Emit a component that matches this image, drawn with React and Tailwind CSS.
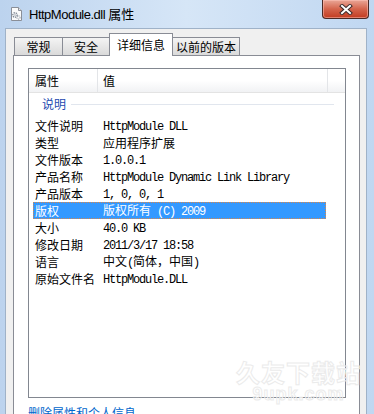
import React from "react";

const rows = [
  ["文件说明", [["m", "HttpModule DLL"]]],
  ["类型", [["c", "应用程序扩展"]]],
  ["文件版本", [["m", "1.0.0.1"]]],
  ["产品名称", [["m", "HttpModule Dynamic Link Library"]]],
  ["产品版本", [["m", "1, 0, 0, 1"]]],
  ["版权", [["c", "版权所有"], ["m", " (C) 2009"]], true],
  ["大小", [["m", "40.0 KB"]]],
  ["修改日期", [["m", "2011/3/17 18:58"]]],
  ["语言", [["c", "中文"], ["m", "("], ["c", "简体，中国"], ["m", ")"]]],
  ["原始文件名", [["m", "HttpModule.DLL"]]],
];

function Value({ parts }) {
  return (
    <span className="whitespace-pre">
      {parts.map(([k, t], i) =>
        k === "m" ? (
          <span key={i} className="font-['Liberation_Mono',monospace] text-[12px] tracking-[-1.2px]">
            {t}
          </span>
        ) : (
          <span key={i} className="font-['Noto_Sans_CJK_SC',sans-serif] text-[12px]">
            {t}
          </span>
        )
      )}
    </span>
  );
}

function DllIcon() {
  return (
    <svg width="13" height="14" viewBox="0 0 13 14">
      <path d="M1.5 0.5 H8.5 L11.5 3.5 V13.5 H1.5 Z" fill="#fbfbfb" stroke="#8a8f98" />
      <path d="M8.5 0.5 V3.5 H11.5" fill="#e6e6e6" stroke="#8a8f98" />
      <circle cx="5" cy="8" r="2.2" fill="none" stroke="#7d8794" strokeWidth="1.4" strokeDasharray="1.2 0.8" />
      <circle cx="5" cy="8" r="0.8" fill="#9aa3ad" />
      <circle cx="8.5" cy="10.5" r="1.6" fill="none" stroke="#a0a8b2" strokeWidth="1.1" strokeDasharray="1 0.7" />
    </svg>
  );
}

export default function App() {
  return (
    <div className="relative w-[374px] h-[414px] overflow-hidden flex flex-col bg-gradient-to-r from-[#bcd3ee] via-[#d6e6f7] to-[#c0d7f1] font-['Noto_Sans_CJK_SC',sans-serif] text-black">
      {/* title bar */}
      <div className="h-[28px] shrink-0 flex items-start">
        <div className="h-[28px] flex items-center pl-[10px] gap-[6px]">
          <DllIcon />
          <span className="text-[13px] leading-none">
            <span className="font-['Liberation_Sans',sans-serif] tracking-[-0.5px] text-[13px]">HttpModule.dll </span>
            <span className="font-['Noto_Sans_CJK_SC',sans-serif]">属性</span>
          </span>
        </div>
        <div className="ml-auto mr-[5px] w-[47px] h-[19px] rounded-b-[4px] border border-t-0 border-[#4a2a26] bg-gradient-to-b from-[#e9a697] via-[#d4644c] to-[#c23a1f] flex items-center justify-center shadow-[inset_0_0_0_1px_rgba(255,200,190,0.5)]">
          <svg width="14" height="11" viewBox="0 0 14 11">
            <path d="M3 2 L11 9 M11 2 L3 9" stroke="#3b2b2b" strokeWidth="4" strokeLinecap="square" />
            <path d="M3 2 L11 9 M11 2 L3 9" stroke="#ffffff" strokeWidth="2" strokeLinecap="square" />
          </svg>
        </div>
      </div>

      {/* client area */}
      <div className="flex-1 ml-[5px] mr-[7px] bg-[#f0f0f0] border-l border-t border-r border-[#9fb2c8] flex flex-col">
        {/* tabs */}
        <div className="h-[26px] shrink-0 flex items-end pl-[8px] text-[12px]">
          <div className="w-[49px] h-[18px] border border-b-0 border-[#898c95] bg-gradient-to-b from-[#f4f4f4] to-[#dadada] flex items-center justify-center pt-[1px]">
            常规
          </div>
          <div className="-ml-px w-[48px] h-[18px] border border-b-0 border-[#898c95] bg-gradient-to-b from-[#f4f4f4] to-[#dadada] flex items-center justify-center pt-[1px]">
            安全
          </div>
          <div className="relative z-10 -ml-px -mb-px w-[64px] h-[23px] border border-b-0 border-[#898c95] bg-white flex items-center justify-center">
            详细信息
          </div>
          <div className="-ml-px w-[68px] h-[18px] border border-b-0 border-[#898c95] bg-gradient-to-b from-[#f4f4f4] to-[#dadada] flex items-center justify-center pt-[1px]">
            以前的版本
          </div>
        </div>

        {/* tab panel */}
        <div className="ml-[7px] mr-[6px] flex-1 border border-[#898c95] bg-white pt-[12px] pl-[14px] pr-[13px] flex flex-col">
          <div className="h-[330px] shrink-0 border border-[#828790] flex flex-col text-[12px]">
            {/* header */}
            <div className="h-[24px] shrink-0 flex border-b border-[#e3e3e3] bg-gradient-to-b from-white via-white to-[#f1f2f4]">
              <div className="w-[69px] pl-[6px] flex items-center border-r border-[#e3e5e8]">属性</div>
              <div className="w-[230px] pl-[5px] flex items-center border-r border-[#e3e5e8]">值</div>
              <div className="flex-1" />
            </div>
            {/* group */}
            <div className="h-[24px] shrink-0 flex items-center pl-[13px] pr-[11px] gap-[5px] pb-[2px]">
              <span className="text-[#1c49b0]">说明</span>
              <div className="flex-1 h-px bg-[#e1e6ee]" />
            </div>
            {/* rows */}
            <div className="pl-[4px] flex flex-col">
              {rows.map(([label, parts, sel]) => (
                <div
                  key={label}
                  className={
                    sel
                      ? "w-[293px] h-[17px] flex items-center bg-[#3399ff] text-white outline-1 outline-dotted outline-[#d9874a] -outline-offset-1"
                      : "w-[293px] h-[17px] flex items-center"
                  }
                >
                  <div className="w-[70px] pl-[2px] shrink-0">{label}</div>
                  <Value parts={parts} />
                </div>
              ))}
            </div>
          </div>
          <div className="mt-[7px] text-[12px] leading-[16px] text-[#0066cc]">删除属性和个人信息</div>
        </div>
      </div>

      {/* watermark */}
      <div className="absolute left-[236px] top-[358px] flex flex-col items-center pointer-events-none">
        <span className="text-[24px] leading-[27px] font-bold tracking-[1px] text-white/0 [-webkit-text-stroke:1px_#ebebeb] font-['Noto_Sans_CJK_SC',sans-serif]">
          久友下载站
        </span>
        <span className="text-[18px] leading-[18px] font-bold tracking-[1px] text-white/0 [-webkit-text-stroke:1px_#ebebeb] font-['Liberation_Sans',sans-serif]">
          9upk.com
        </span>
      </div>
    </div>
  );
}
